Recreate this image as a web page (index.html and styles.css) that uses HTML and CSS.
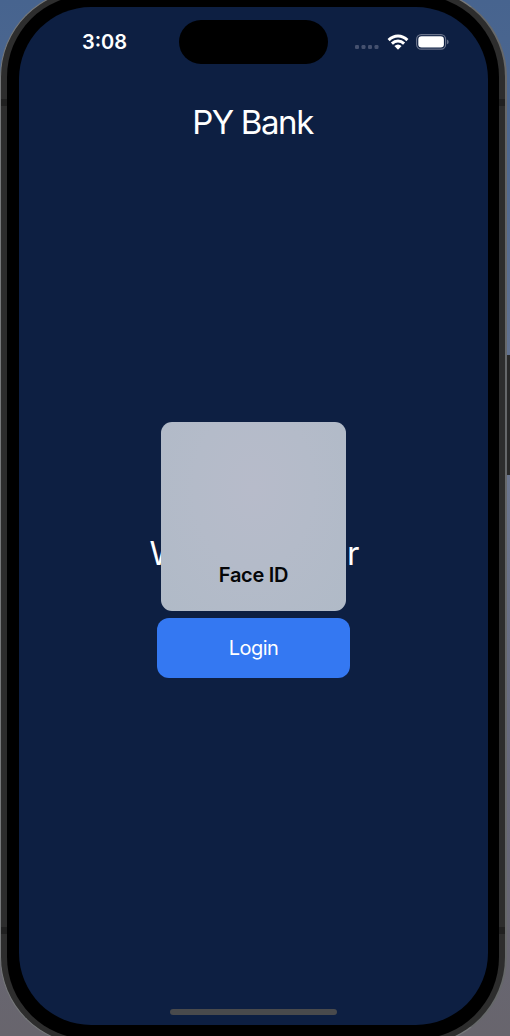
FILE: index.html
```html
<!DOCTYPE html>
<html lang="en">
<head>
<meta charset="utf-8">
<title>PY Bank</title>
<link rel="stylesheet" href="styles.css">
</head>
<body>
<div class="desktop">
  <div class="side-button"></div>
  <div class="device">
    <i class="seam seam-tl"></i><i class="seam seam-tr"></i><i class="seam seam-bl"></i><i class="seam seam-br"></i>
    <div class="bezel">
      <main class="screen">
        <header class="status">
          <span class="time">3:08</span>
          <div class="island"></div>
          <div class="indicators">
            <svg class="dots" width="24" height="4" viewBox="0 0 24 4" fill="#45516f"><rect x="0" width="4" height="4" rx="1.2"/><rect x="6.5" width="4" height="4" rx="1.2"/><rect x="13" width="4" height="4" rx="1.2"/><rect x="19.5" width="4" height="4" rx="1.2"/></svg>
            <svg class="wifi" width="22" height="16" viewBox="0 0 22 16"><g fill="none" stroke="#fff" stroke-width="3"><path d="M1.6 6.1Q5.7 2 11 2T20.4 6.1"/><path d="M4.9 9.7Q7.6 7.1 11 7.1T17.1 9.7"/></g><path fill="#fff" d="M7.4 12.1Q9 10.6 11 10.6T14.6 12.1L11.5 15.3Q11 15.8 10.5 15.3Z"/></svg>
            <svg class="battery" width="33" height="16" viewBox="0 0 33 16"><rect x=".6" y=".6" width="29" height="14.6" rx="4.6" fill="none" stroke="#68728a" stroke-width="1.2"/><rect x="2.3" y="2.3" width="25.6" height="11.2" rx="3.2" fill="#fff"/><path d="M31 5.5Q32.7 6.2 32.7 7.9T31 10.3Z" fill="#68728a"/></svg>
          </div>
        </header>
        <h1 class="title">PY Bank</h1>
        <section class="content">
          <p class="welcome">Welcome Use<span class="last">r</span></p>
          <button class="login" type="button">Login</button>
          <div class="face-card">Face ID</div>
        </section>
        <div class="home-bar"></div>
      </main>
    </div>
  </div>
</div>
</body>
</html>
```
FILE: styles.css
```css
* { box-sizing: border-box; }
body { margin: 0; font-family: Inter, "Liberation Sans", sans-serif; }
.desktop {
  position: relative;
  width: 510px;
  height: 1036px;
  overflow: hidden;
  display: flow-root;
  background: linear-gradient(#47648f 0%, #4f688f 15%, #6b768f 45%, #66687a 75%, #68656d 100%);
}
.side-button {
  position: absolute;
  left: 505px;
  top: 355px;
  width: 8px;
  height: 120px;
  border-radius: 2px;
  background: #292929;
}
.device {
  position: relative;
  width: 507px;
  height: 1056px;
  margin: -11px 0 0;
  padding: 5px 6px;
  border: 1px solid #77797b;
  border-right: 2px solid #66686a;
  border-radius: 88px;
  background: #2d2d2d;
}
.seam { position: absolute; width: 6px; height: 7px; background: #202020; }
.seam-tl { left: 0; top: 109px; }
.seam-tr { right: 0; top: 109px; }
.seam-bl { left: 0; top: 937px; }
.seam-br { right: 0; top: 937px; }
.bezel {
  height: 100%;
  padding: 12px 11px 12px 12px;
  border-radius: 82px;
  background: #000;
}
.screen {
  height: 1018px;
  display: flex;
  flex-direction: column;
  align-items: center;
  border-radius: 72px;
  background: #0d1f42;
  color: #fff;
}
.status {
  width: 100%;
  height: 71px;
  padding-top: 13px;
  display: grid;
  grid-template-columns: 160px 149px 160px;
  align-items: start;
}
.time {
  padding: 9px 0 0 63px;
  font-size: 20px;
  line-height: 26px;
  font-weight: 600;
}
.island { height: 44px; border-radius: 22px; background: #000; }
.indicators { display: flex; align-items: flex-start; padding: 14px 0 0 27px; }
.dots { margin-top: 11px; }
.wifi { margin-left: 8px; }
.battery { margin-left: 7px; }
.title {
  margin: 22px 2px 0 0;
  font-size: 33px;
  line-height: 44px;
  font-weight: 400;
  letter-spacing: -1.4px;
}
.content {
  position: relative;
  margin-top: 387px;
  width: 221px;
  display: flex;
  flex-direction: column;
  align-items: center;
}
.welcome {
  margin: 0;
  font-size: 33px;
  line-height: 44px;
  font-weight: 400;
  letter-spacing: -1.9px;
  white-space: nowrap;
}
.last { margin-left: 3px; }
.login {
  margin: 43px 0 0;
  width: 193px;
  height: 60px;
  border: 0;
  border-radius: 12px;
  background: #3478f2;
  color: #fff;
  font: 400 20px/60px Inter, sans-serif;
  letter-spacing: -0.5px;
  padding: 0;
}
.face-card {
  position: absolute;
  left: 18px;
  top: -109px;
  width: 185px;
  height: 189px;
  padding-top: 140px;
  border-radius: 11px;
  background: radial-gradient(ellipse at 50% 35%, #b7bbca 0%, #b4bbc9 45%, #b0bac7 100%);
  color: #050608;
  font-size: 20px;
  line-height: 26px;
  font-weight: 600;
  letter-spacing: -0.3px;
  text-align: center;
}
.home-bar {
  margin: auto 0 10px;
  width: 167px;
  height: 6px;
  border-radius: 3px;
  background: #494a4c;
}
```
